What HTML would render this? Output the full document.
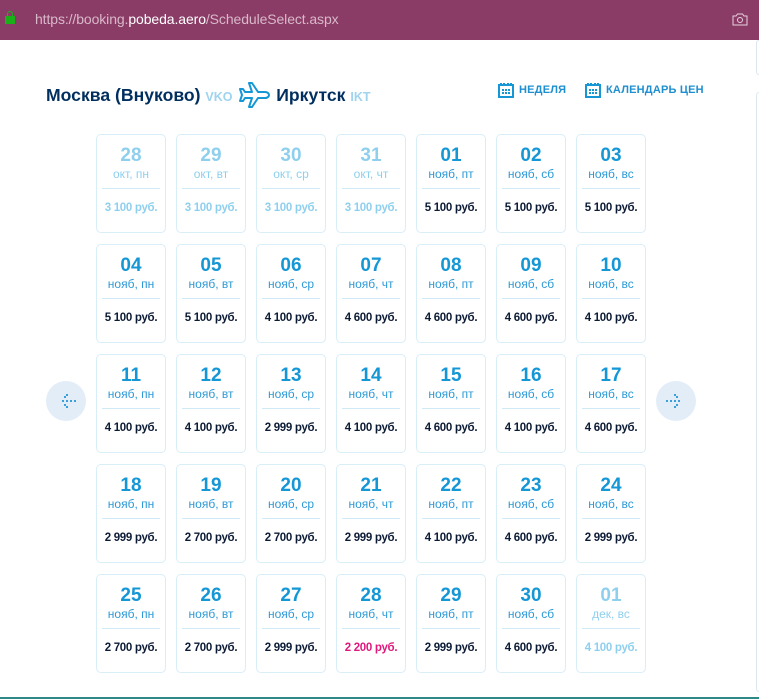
<!DOCTYPE html>
<html><head><meta charset="utf-8"><style>
*{margin:0;padding:0;box-sizing:border-box}
body{width:759px;height:699px;overflow:hidden;background:#fff;font-family:"Liberation Sans",sans-serif;position:relative}
.bar{position:absolute;left:0;top:0;width:759px;height:40px;background:#8a3c66}
.url{position:absolute;left:35px;top:11px;font-size:14px;color:#d9b8c9;letter-spacing:-0.1px}
.url b{font-weight:normal;color:#fff}
.lock{position:absolute;left:5px;top:16px;width:10px;height:8px;background:#19b019}
.lock:before{content:"";position:absolute;left:2px;top:-5px;width:6px;height:6px;border:1.5px solid #19b019;border-bottom:none;border-radius:3px 3px 0 0;box-sizing:border-box}
.title{position:absolute;top:81px;left:46px;font-size:17.6px;font-weight:bold;color:#002f5f;white-space:nowrap}
.code{font-size:12.5px;color:#9fd3ee;font-weight:bold}
.lnk{position:absolute;top:84px;font-size:11px;font-weight:bold;color:#1e8fd0;letter-spacing:0.2px}
.cell{position:absolute;width:70px;height:99px;border:1px solid #d8eef8;border-radius:5px;text-align:center}
.cell .d{position:absolute;top:10px;left:0;right:0;font-size:19px;font-weight:bold;color:#1597d6}
.cell .w{position:absolute;top:32px;left:0;right:0;font-size:12px;color:#2d9ad6}
.cell .ln{position:absolute;top:53px;left:5px;right:5px;border-top:1px solid #cfe9f6}
.cell .p{position:absolute;top:67px;left:0;right:0;font-size:11.5px;font-weight:bold;color:#0d1c36;letter-spacing:-0.3px}
.cell.o .d,.cell.o .w,.cell.o .p{color:#8fcfee}
.cell .p.r{color:#e0197d}
.arr{position:absolute;top:381px;width:40px;height:40px;border-radius:50%;background:#e3edf8}
</style></head><body>
<div class="bar"><div class="lock"></div><div class="url">https://booking.<b>pobeda.aero</b>/ScheduleSelect.aspx</div>
<svg style="position:absolute;left:732px;top:12px" width="16" height="14" viewBox="0 0 16 14"><path d="M1 4h3l1.5-2h5L12 4h3v9H1z" fill="none" stroke="#e8d2de" stroke-width="1"/><circle cx="8" cy="8" r="2.5" fill="none" stroke="#e8d2de"/></svg></div>
<div style="position:absolute;left:756px;top:40px;width:6px;height:35px;border:1px solid #dde8ee;border-radius:4px"></div>
<div style="position:absolute;left:756px;top:92px;width:6px;height:600px;border:1px solid #dde8ee;border-radius:4px"></div>
<div class="title">Москва (Внуково) <span class="code">VKO</span>
<svg style="vertical-align:-8px;margin:0 1px" width="32" height="28" viewBox="0 0 32 28"><path d="M11 2h3l6 9h7c3 0 4 2 4 3s-1 3-4 3h-7l-6 9h-3l3-9H7l-2 3H2l2-6-2-6h3l2 3h7z" fill="none" stroke="#1597d6" stroke-width="2" stroke-linejoin="round"/></svg>
Иркутск <span class="code">IKT</span></div>
<svg style="position:absolute;left:498px;top:82px" width="16" height="16" viewBox="0 0 16 16"><path d="M1 3h14v12H1z M3 1v3 M6 1v3 M10 1v3 M13 1v3" fill="none" stroke="#1597d6" stroke-width="2"/><path d="M4 7h2v2H4zM7 7h2v2H7zM10 7h2v2h-2zM4 10h2v2H4zM7 10h2v2H7zM10 10h2v2h-2z" fill="#1597d6"/></svg>
<div class="lnk" style="left:519px">НЕДЕЛЯ</div>
<svg style="position:absolute;left:585px;top:82px" width="16" height="16" viewBox="0 0 16 16"><path d="M1 3h14v12H1z M3 1v3 M6 1v3 M10 1v3 M13 1v3" fill="none" stroke="#1597d6" stroke-width="2"/><path d="M4 7h2v2H4zM7 7h2v2H7zM10 7h2v2h-2zM4 10h2v2H4zM7 10h2v2H7zM10 10h2v2h-2z" fill="#1597d6"/></svg>
<div class="lnk" style="left:606px">КАЛЕНДАРЬ ЦЕН</div>
<div class="arr" style="left:46px"><svg width="40" height="40" viewBox="0 0 40 40" fill="#3aa0dc"><rect x="20" y="19" width="2" height="2"/><rect x="24" y="19" width="2" height="2"/><rect x="28" y="19" width="2" height="2"/><rect x="16" y="19" width="2" height="2"/><rect x="18" y="15" width="2" height="2"/><rect x="20" y="13" width="2" height="2"/><rect x="18" y="23" width="2" height="2"/><rect x="20" y="25" width="2" height="2"/></svg></div>
<div class="arr" style="left:656px"><svg width="40" height="40" viewBox="0 0 40 40" fill="#3aa0dc"><rect x="18" y="19" width="2" height="2"/><rect x="14" y="19" width="2" height="2"/><rect x="10" y="19" width="2" height="2"/><rect x="22" y="19" width="2" height="2"/><rect x="20" y="15" width="2" height="2"/><rect x="18" y="13" width="2" height="2"/><rect x="20" y="23" width="2" height="2"/><rect x="18" y="25" width="2" height="2"/></svg></div>

<div class="cell o" style="left:96px;top:134px"><div class="d">28</div><div class="w">окт, пн</div><div class="ln"></div><div class="p">3 100 руб.</div></div>
<div class="cell o" style="left:176px;top:134px"><div class="d">29</div><div class="w">окт, вт</div><div class="ln"></div><div class="p">3 100 руб.</div></div>
<div class="cell o" style="left:256px;top:134px"><div class="d">30</div><div class="w">окт, ср</div><div class="ln"></div><div class="p">3 100 руб.</div></div>
<div class="cell o" style="left:336px;top:134px"><div class="d">31</div><div class="w">окт, чт</div><div class="ln"></div><div class="p">3 100 руб.</div></div>
<div class="cell" style="left:416px;top:134px"><div class="d">01</div><div class="w">нояб, пт</div><div class="ln"></div><div class="p">5 100 руб.</div></div>
<div class="cell" style="left:496px;top:134px"><div class="d">02</div><div class="w">нояб, сб</div><div class="ln"></div><div class="p">5 100 руб.</div></div>
<div class="cell" style="left:576px;top:134px"><div class="d">03</div><div class="w">нояб, вс</div><div class="ln"></div><div class="p">5 100 руб.</div></div>

<div class="cell" style="left:96px;top:244px"><div class="d">04</div><div class="w">нояб, пн</div><div class="ln"></div><div class="p">5 100 руб.</div></div>
<div class="cell" style="left:176px;top:244px"><div class="d">05</div><div class="w">нояб, вт</div><div class="ln"></div><div class="p">5 100 руб.</div></div>
<div class="cell" style="left:256px;top:244px"><div class="d">06</div><div class="w">нояб, ср</div><div class="ln"></div><div class="p">4 100 руб.</div></div>
<div class="cell" style="left:336px;top:244px"><div class="d">07</div><div class="w">нояб, чт</div><div class="ln"></div><div class="p">4 600 руб.</div></div>
<div class="cell" style="left:416px;top:244px"><div class="d">08</div><div class="w">нояб, пт</div><div class="ln"></div><div class="p">4 600 руб.</div></div>
<div class="cell" style="left:496px;top:244px"><div class="d">09</div><div class="w">нояб, сб</div><div class="ln"></div><div class="p">4 600 руб.</div></div>
<div class="cell" style="left:576px;top:244px"><div class="d">10</div><div class="w">нояб, вс</div><div class="ln"></div><div class="p">4 100 руб.</div></div>

<div class="cell" style="left:96px;top:354px"><div class="d">11</div><div class="w">нояб, пн</div><div class="ln"></div><div class="p">4 100 руб.</div></div>
<div class="cell" style="left:176px;top:354px"><div class="d">12</div><div class="w">нояб, вт</div><div class="ln"></div><div class="p">4 100 руб.</div></div>
<div class="cell" style="left:256px;top:354px"><div class="d">13</div><div class="w">нояб, ср</div><div class="ln"></div><div class="p">2 999 руб.</div></div>
<div class="cell" style="left:336px;top:354px"><div class="d">14</div><div class="w">нояб, чт</div><div class="ln"></div><div class="p">4 100 руб.</div></div>
<div class="cell" style="left:416px;top:354px"><div class="d">15</div><div class="w">нояб, пт</div><div class="ln"></div><div class="p">4 600 руб.</div></div>
<div class="cell" style="left:496px;top:354px"><div class="d">16</div><div class="w">нояб, сб</div><div class="ln"></div><div class="p">4 100 руб.</div></div>
<div class="cell" style="left:576px;top:354px"><div class="d">17</div><div class="w">нояб, вс</div><div class="ln"></div><div class="p">4 600 руб.</div></div>

<div class="cell" style="left:96px;top:464px"><div class="d">18</div><div class="w">нояб, пн</div><div class="ln"></div><div class="p">2 999 руб.</div></div>
<div class="cell" style="left:176px;top:464px"><div class="d">19</div><div class="w">нояб, вт</div><div class="ln"></div><div class="p">2 700 руб.</div></div>
<div class="cell" style="left:256px;top:464px"><div class="d">20</div><div class="w">нояб, ср</div><div class="ln"></div><div class="p">2 700 руб.</div></div>
<div class="cell" style="left:336px;top:464px"><div class="d">21</div><div class="w">нояб, чт</div><div class="ln"></div><div class="p">2 999 руб.</div></div>
<div class="cell" style="left:416px;top:464px"><div class="d">22</div><div class="w">нояб, пт</div><div class="ln"></div><div class="p">4 100 руб.</div></div>
<div class="cell" style="left:496px;top:464px"><div class="d">23</div><div class="w">нояб, сб</div><div class="ln"></div><div class="p">4 600 руб.</div></div>
<div class="cell" style="left:576px;top:464px"><div class="d">24</div><div class="w">нояб, вс</div><div class="ln"></div><div class="p">2 999 руб.</div></div>

<div class="cell" style="left:96px;top:574px"><div class="d">25</div><div class="w">нояб, пн</div><div class="ln"></div><div class="p">2 700 руб.</div></div>
<div class="cell" style="left:176px;top:574px"><div class="d">26</div><div class="w">нояб, вт</div><div class="ln"></div><div class="p">2 700 руб.</div></div>
<div class="cell" style="left:256px;top:574px"><div class="d">27</div><div class="w">нояб, ср</div><div class="ln"></div><div class="p">2 999 руб.</div></div>
<div class="cell" style="left:336px;top:574px"><div class="d">28</div><div class="w">нояб, чт</div><div class="ln"></div><div class="p r">2 200 руб.</div></div>
<div class="cell" style="left:416px;top:574px"><div class="d">29</div><div class="w">нояб, пт</div><div class="ln"></div><div class="p">2 999 руб.</div></div>
<div class="cell" style="left:496px;top:574px"><div class="d">30</div><div class="w">нояб, сб</div><div class="ln"></div><div class="p">4 600 руб.</div></div>
<div class="cell o" style="left:576px;top:574px"><div class="d">01</div><div class="w">дек, вс</div><div class="ln"></div><div class="p">4 100 руб.</div></div>

<div style="position:absolute;left:0;top:697px;width:759px;height:2px;background:#2f8a86"></div>
</body></html>
